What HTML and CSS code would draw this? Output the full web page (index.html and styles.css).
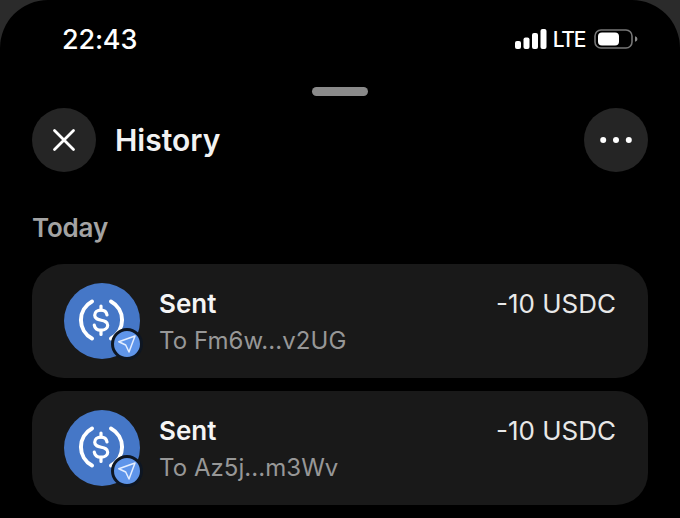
FILE: index.html
```html
<!DOCTYPE html>
<html lang="en">
<head>
<meta charset="utf-8">
<title>History</title>
<link rel="stylesheet" href="styles.css">
</head>
<body>
<main class="screen">
  <div class="status">
    <span class="time">22:43</span>
    <div class="status-right">
      <svg class="signal" width="32" height="20" viewBox="0 0 32 20"><rect x="0" y="12" width="6" height="8" rx="2"/><rect x="8.5" y="8.500" width="6" height="11.500" rx="2"/><rect x="17" y="4" width="6" height="16" rx="2"/><rect x="25.500" y="0" width="6" height="20" rx="2"/></svg>
      <span class="lte">LTE</span>
      <svg class="battery" width="44" height="20" viewBox="0 0 44 20"><rect x="1" y="1" width="37" height="18" rx="6" fill="none" stroke="#777" stroke-width="1.600"/><rect x="4" y="3.500" width="21" height="13" rx="4" fill="#fff"/><path d="M41 7.200c1.600.5 2.400 1.500 2.400 2.800s-.8 2.300-2.400 2.800z" fill="#888"/></svg>
    </div>
  </div>
  <div class="handle"></div>
  <header class="head">
    <div class="head-left">
      <button class="round"><svg width="24" height="24" viewBox="0 0 24 24"><path d="M2.500 2.500 21.500 21.500M21.500 2.500 2.500 21.500" stroke="#fff" stroke-width="2.800" stroke-linecap="round"/></svg></button>
      <h1 class="title">History</h1>
    </div>
    <button class="round"><svg width="32" height="8" viewBox="0 0 32 8"><circle cx="3.200" cy="4" r="3" fill="#fff"/><circle cx="16" cy="4" r="3" fill="#fff"/><circle cx="28.800" cy="4" r="3" fill="#fff"/></svg></button>
  </header>
  <h2 class="section">Today</h2>
  <ul class="list">
    <li class="card">
      <div class="avatar">
        <svg class="coin" width="76" height="76" viewBox="0 0 76 76"><circle cx="38" cy="38" r="38" fill="#4577c7"/><g fill="none" stroke="#fff" stroke-linecap="round"><path stroke-width="4" d="M28 18.500A21 21 0 0 0 28 55.500"/><path stroke-width="4" d="M47 18.500A21 21 0 0 1 47 55.500"/><path stroke-width="3.200" d="M43 32c-.5-3-3-4.800-6-4.800-3.800 0-6.300 2-6.300 5 0 7.300 13 2.800 13 10 0 3-2.800 5-6.700 5-3.600 0-6.200-2-6.700-5"/><path stroke-width="3.200" d="M37 23v4M37 47.500v4"/></g></svg>
        <span class="badge"><svg width="20" height="20" viewBox="0 0 20 20"><path d="M18 2 1.800 7.800 8.700 11 12 18z" fill="none" stroke="#e4eeff" stroke-width="1.500" stroke-linejoin="round"/></svg></span>
      </div>
      <div class="info"><span class="name">Sent</span><span class="addr">To Fm6w...v2UG</span></div>
      <span class="amount">-10 USDC</span>
    </li>
    <li class="card">
      <div class="avatar">
        <svg class="coin" width="76" height="76" viewBox="0 0 76 76"><circle cx="38" cy="38" r="38" fill="#4577c7"/><g fill="none" stroke="#fff" stroke-linecap="round"><path stroke-width="4" d="M28 18.500A21 21 0 0 0 28 55.500"/><path stroke-width="4" d="M47 18.500A21 21 0 0 1 47 55.500"/><path stroke-width="3.200" d="M43 32c-.5-3-3-4.800-6-4.800-3.800 0-6.300 2-6.300 5 0 7.300 13 2.800 13 10 0 3-2.800 5-6.700 5-3.600 0-6.200-2-6.700-5"/><path stroke-width="3.200" d="M37 23v4M37 47.500v4"/></g></svg>
        <span class="badge"><svg width="20" height="20" viewBox="0 0 20 20"><path d="M18 2 1.800 7.800 8.700 11 12 18z" fill="none" stroke="#e4eeff" stroke-width="1.500" stroke-linejoin="round"/></svg></span>
      </div>
      <div class="info"><span class="name">Sent</span><span class="addr">To Az5j...m3Wv</span></div>
      <span class="amount">-10 USDC</span>
    </li>
  </ul>
</main>
</body>
</html>
```
FILE: styles.css
```css
* { box-sizing: border-box; margin: 0; padding: 0; }
html, body { height: 100%; overflow: hidden; }
body { background: #2b2b2b; font-family: Inter, "Liberation Sans", sans-serif; color: #fff; }
.screen { height: 518px; background: #000; border-radius: 48px 48px 0 0; padding: 0 32px; overflow: hidden; }
.status { height: 78px; display: flex; align-items: center; justify-content: space-between; padding: 0 10px 0 30px; }
.time { font-size: 27px; font-weight: 500; letter-spacing: -.2px; line-height: 1; }
.status-right { display: flex; align-items: center; gap: 6px; }
.signal { fill: #fff; }
.lte { font-size: 21px; font-weight: 500; letter-spacing: -1.300px; line-height: 1; }
.battery { margin-left: 3px; }
.handle { width: 56px; height: 9px; margin: 9px auto 12px; border-radius: 5px; background: #8a8a8a; }
.head { display: flex; align-items: center; justify-content: space-between; }
.head-left { display: flex; align-items: center; gap: 19px; }
.round { width: 64px; height: 64px; border: 0; border-radius: 50%; background: #252525; display: flex; align-items: center; justify-content: center; }
.title { font-size: 30px; font-weight: 600; line-height: 36px; color: #f2f2f2; }
.section { margin-top: 40px; font-size: 26px; font-weight: 600; letter-spacing: -.2px; line-height: 32px; color: #a3a3a3; }
.list { list-style: none; margin-top: 20px; display: flex; flex-direction: column; gap: 13px; }
.card { height: 114px; padding: 0 32px; border-radius: 32px; background: #191919; display: flex; align-items: center; }
.avatar { position: relative; width: 76px; height: 76px; flex: none; margin: 0 19.500px 0 -.500px; }
.coin { display: block; }
.badge { position: absolute; right: -3px; bottom: -1px; width: 32px; height: 32px; border: 3px solid #0e1622; border-radius: 50%; background: #5f95ea; display: flex; align-items: center; justify-content: center; }
.badge svg { width: 20px; height: 20px; }
.info { flex: 1; display: flex; flex-direction: column; gap: 7px; padding-top: 2px; }
.name { font-size: 26px; font-weight: 600; line-height: 30px; color: #f5f5f5; }
.addr { font-size: 24px; font-weight: 400; letter-spacing: .05px; line-height: 30px; color: #979797; }
.amount { align-self: flex-start; margin-top: 25px; font-size: 26px; font-weight: 400; line-height: 30px; color: #e8e8e8; }
```
